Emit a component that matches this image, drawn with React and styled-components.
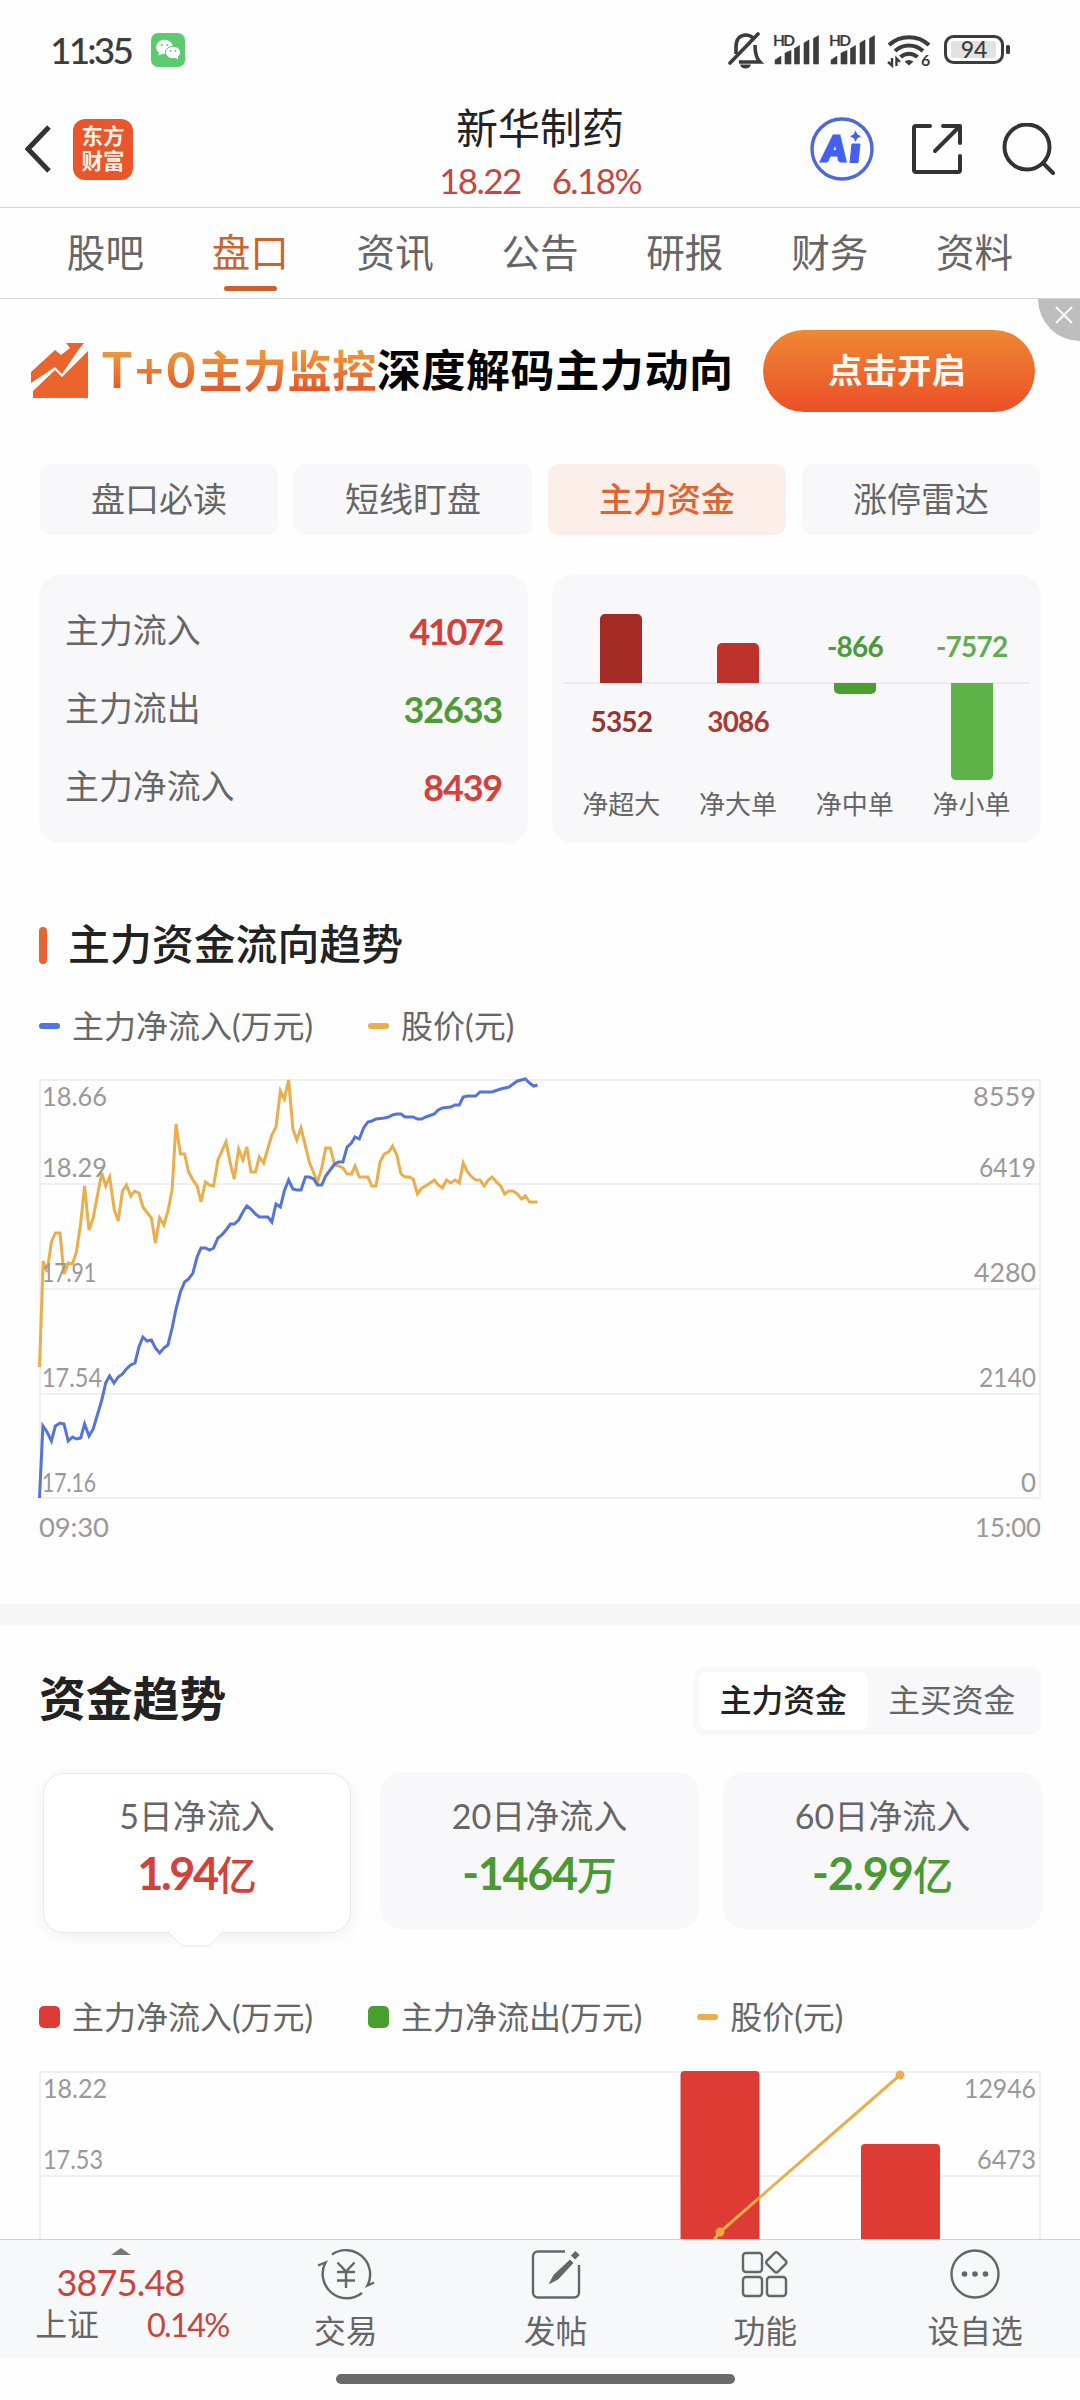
import React from "react";
import styled, { createGlobalStyle } from "styled-components";

const GlobalStyle = createGlobalStyle`
  * {
    box-sizing: border-box;
  }

  body {
    margin: 0;
    background: #fefefe;
    font-family: Lato, "Noto Sans CJK SC", sans-serif;
    line-height: 1;
    color: #666;
  }
`;

const Screen = styled.div`
  width: 1080px;
  height: 2400px;
  display: flex;
  flex-direction: column;
  overflow: hidden;
  background: #fefefe;
`;

/* ---------- status bar ---------- */

const StatusBar = styled.div`
  height: 100px;
  flex: none;
  display: flex;
  align-items: center;
  justify-content: space-between;
  padding: 0 69px 0 50px;
  color: #3c3c3c;
`;

const StatusLeft = styled.div`
  display: flex;
  align-items: center;
  gap: 20px;
`;

const Clock = styled.span`
  width: 81px;
  padding-bottom: 1px;
  font-size: 37px;
  font-weight: 500;
  letter-spacing: -2.8px;
  white-space: nowrap;
`;

/* ---------- header ---------- */

const Header = styled.header`
  height: 108px;
  flex: none;
  display: grid;
  grid-template-columns: 1fr auto 1fr;
  align-items: center;
  padding: 0 25px 11px;
  border-bottom: 1px solid #d6d6d6;
`;

const HeaderLeft = styled.div`
  display: flex;
  align-items: center;
  gap: 22px;
`;

const AppBadge = styled.div`
  width: 60px;
  height: 61px;
  border-radius: 12px;
  background: #ea552a;
  color: #fff3ea;
  display: flex;
  flex-direction: column;
  align-items: center;
  justify-content: center;
  font-size: 21.5px;
  font-weight: 700;
  line-height: 25px;
`;

const HeaderTitle = styled.div`
  display: flex;
  flex-direction: column;
  align-items: center;
  padding-top: 7px;

  h1 {
    margin: 0;
    font-size: 42px;
    font-weight: 400;
    color: #222;
  }

  p {
    margin: 13px 0 0;
    display: flex;
    gap: 31px;
    font-size: 35px;
    line-height: 36px;
    letter-spacing: -1.6px;
    color: #c8453d;
  }
`;

const HeaderActions = styled.div`
  display: flex;
  align-items: center;
  justify-content: flex-end;
  gap: 36px;

  svg:last-child {
    margin-left: 3px;
  }
`;

/* ---------- tabs ---------- */

const Tabs = styled.nav`
  height: 91px;
  flex: none;
  display: flex;
  padding: 0 33px;
  border-bottom: 1px solid #d6d6d6;
`;

const Tab = styled.a`
  flex: 1;
  display: flex;
  flex-direction: column;
  align-items: center;
  padding-top: 25px;
  font-size: 38.6px;
  color: ${(p) => (p.$active ? "#c9632f" : "#666")};

  &:after {
    content: "";
    width: 53px;
    height: 5px;
    margin-top: 14px;
    border-radius: 3px;
    background: ${(p) => (p.$active ? "#c9602f" : "transparent")};
  }
`;

/* ---------- banner ---------- */

const Banner = styled.div`
  position: relative;
  height: 165px;
  flex: none;
  display: flex;
  align-items: flex-start;
  padding: 31px 45px 0 31px;
`;

const BannerIcon = styled.svg`
  margin: 12px 14px 0 0;
  flex: none;
`;

const BannerText = styled.div`
  display: flex;
  align-items: center;
  height: 80px;
  flex: 1;
  font-size: 44px;
  font-weight: 700;
  letter-spacing: 0.6px;
  color: #000;
  white-space: nowrap;
`;

const Highlight = styled.span`
  line-height: 60px;
  color: transparent;
  background: linear-gradient(#e9a040 14%, #ee8433 40%, #e0522a 88%);
  background-clip: text;
  -webkit-background-clip: text;

  b {
    font-size: 50px;
    font-weight: 700;
    letter-spacing: 2.8px;
  }
`;

const BannerButton = styled.button`
  width: 272px;
  height: 82px;
  border: 0;
  border-radius: 41px;
  background: linear-gradient(#ef8833, #ea4f28);
  color: #fff8ee;
  font: 700 34.5px/1 Lato, "Noto Sans CJK SC", sans-serif;
  padding: 0 4px 2px 0;
`;

const CloseCorner = styled.div`
  position: absolute;
  top: 0;
  right: 0;
  width: 42px;
  height: 42px;
  border-bottom-left-radius: 42px;
  background: #bdbdbd;
  display: flex;
  padding: 7px 0 0 17px;
`;

/* ---------- chips and summary cards ---------- */

const Chips = styled.div`
  display: flex;
  gap: 16px;
  padding: 0 40px;
`;

const Chip = styled.div`
  flex: 1;
  height: 71px;
  border-radius: 11px;
  display: flex;
  align-items: center;
  justify-content: center;
  padding-bottom: 1px;
  font-size: 34px;
  font-weight: ${(p) => (p.$active ? 500 : 400)};
  color: ${(p) => (p.$active ? "#de6531" : "#666")};
  background: ${(p) => (p.$active ? "#fceee8" : "#f8f8fa")};
`;

const Cards = styled.div`
  display: grid;
  grid-template-columns: 1fr 1fr;
  gap: 24px;
  margin-top: 40px;
  padding: 0 39px;
`;

const Card = styled.div`
  height: 268px;
  border-radius: 21px;
  background: #f8f8fa;
`;

const FlowCard = styled(Card)`
  padding: 17px 26px 0 26px;
`;

const FlowRow = styled.div`
  height: 78px;
  display: flex;
  align-items: center;
  justify-content: space-between;
  font-size: 33.9px;
`;

const FlowValue = styled.span`
  font-size: 36px;
  font-weight: 700;
  letter-spacing: ${(p) => p.$tracking}px;
  color: ${(p) => (p.$up ? "#d2423a" : "#4d9b35")};
`;

const NetCard = styled(Card)`
  padding: 0 11px;
  display: flex;
  flex-direction: column;
`;

const NetColumns = styled.div`
  display: flex;
  height: 208px;
  background: linear-gradient(#ececee, #ececee) 0 107px / 100% 2px no-repeat;
`;

const NetColumn = styled.div`
  flex: 1;
  display: flex;
  flex-direction: column;
  align-items: center;
`;

const NetHalf = styled.div`
  width: 100%;
  display: flex;
  flex-direction: column;
  align-items: center;
`;

const NetUpper = styled(NetHalf)`
  height: 108px;
  justify-content: flex-end;
`;

const NetLower = styled(NetHalf)`
  height: 100px;
`;

const NetBar = styled.div`
  width: 42px;
  background: ${(p) => p.$color};
  border-radius: ${(p) => (p.$positive ? "5px 5px 0 0" : "0 0 5px 5px")};
`;

const NetValue = styled.span`
  font-size: 28px;
  font-weight: 700;
  letter-spacing: -0.8px;
  color: ${(p) => p.$color};
  margin: ${(p) => (p.$positive ? "24px 0 0" : "0 0 23px")};
`;

const NetLabels = styled.div`
  display: flex;
  font-size: 26px;
  padding-top: 8px;

  span {
    flex: 1;
    text-align: center;
  }
`;

/* ---------- sections ---------- */

const SectionTitle = styled.h2`
  display: flex;
  align-items: center;
  gap: 21px;
  margin: 81px 0 0 39px;
  height: 42px;
  font-size: 41.9px;
  font-weight: 500;
  color: #222;

  &:before {
    content: "";
    width: 8px;
    height: 37px;
    border-radius: 4px;
    background: #e8632f;
  }
`;

const Legend = styled.div`
  display: flex;
  gap: 55px;
  margin: ${(p) => p.$top}px 0 0 39px;
  font-size: 32px;
  height: 32px;
`;

const LegendItem = styled.div`
  display: flex;
  align-items: center;
  gap: 12px;

  &:before {
    content: "";
    width: 21px;
    height: ${(p) => (p.$square ? 22 : 6)}px;
    border-radius: ${(p) => (p.$square ? 5 : 3)}px;
    background: ${(p) => p.$color};
  }
`;

const Chart = styled.svg`
  display: block;
  margin: ${(p) => p.$top}px 0 0 36px;

  text {
    font-size: 27.5px;
    fill: #999;
  }

  .bar-value {
    font-weight: 700;
    fill: #4a9a35;
  }
`;

const Divider = styled.div`
  height: 21px;
  margin-top: 54px;
  background: #f7f7f7;
`;

const TrendHead = styled.div`
  display: flex;
  align-items: center;
  justify-content: space-between;
  margin-top: 42px;
  padding: 0 39px;

  h2 {
    margin: 0 0 6px;
    font-size: 46.8px;
    font-weight: 700;
    color: #222;
  }
`;

const Segment = styled.div`
  width: 347px;
  height: 68px;
  border-radius: 10px;
  background: #f8f8fa;
  display: flex;
  padding: 5px;
`;

const SegmentItem = styled.div`
  flex: 1;
  border-radius: 8px;
  display: flex;
  align-items: center;
  justify-content: center;
  font-size: 31.8px;
  font-weight: ${(p) => (p.$active ? 500 : 400)};
  color: ${(p) => (p.$active ? "#222" : "#666")};
  background: ${(p) => (p.$active ? "#fff" : "transparent")};
`;

const Periods = styled.div`
  display: grid;
  grid-template-columns: repeat(3, 319px);
  gap: 24px;
  margin: 37px 0 0 37px;
`;

const Period = styled.div`
  position: relative;
  height: ${(p) => (p.$active ? 160 : 157)}px;
  margin: ${(p) => (p.$active ? "1px 5px 0 6px" : "0")};
  border-radius: 21px;
  padding-top: ${(p) => (p.$active ? 25 : 27)}px;
  text-align: center;
  font-size: 34px;
  background: ${(p) => (p.$active ? "#fff" : "#f8f8fa")};
  border: ${(p) => (p.$active ? "1px solid #e9e9e9" : "0")};
  box-shadow: ${(p) => (p.$active ? "0 4px 18px rgba(0, 0, 0, 0.06)" : "none")};

  svg {
    position: absolute;
    left: 124px;
    bottom: -16px;
  }
`;

const PeriodValue = styled.div`
  margin-top: 18px;
  font-size: 40px;
  font-weight: 500;
  color: ${(p) => (p.$up ? "#d2423a" : "#4a9a33")};

  b {
    font-size: 45px;
    letter-spacing: ${(p) => p.$tracking}px;
  }
`;

const Content = styled.main`
  flex: 1;
  min-height: 0;
  overflow: hidden;
`;

/* ---------- bottom bar ---------- */

const BottomBar = styled.footer`
  height: 119px;
  flex: none;
  display: flex;
  background: #f7f8fa;
  border-top: 1px solid #d0d3d6;
`;

const IndexCell = styled.div`
  width: 241px;
  display: flex;
  flex-direction: column;
  align-items: center;
  padding-top: 8px;
  color: #c8453d;

  svg {
    display: block;
  }

  strong {
    margin: 9px 0;
    font-size: 36px;
    font-weight: 400;
    letter-spacing: -0.8px;
  }

  div {
    display: flex;
    align-items: center;
    gap: 48px;
    padding-left: 23px;
    font-size: 32.5px;
    letter-spacing: -1.7px;
  }

  em {
    font-style: normal;
    font-size: 31.8px;
    letter-spacing: 0;
    color: #666;
  }
`;

const Action = styled.div`
  flex: 1;
  display: flex;
  flex-direction: column;
  align-items: center;
  padding-top: 7px;
  font-size: 31.8px;

  svg {
    margin-bottom: 15px;
  }
`;

const HomeIndicator = styled.div`
  height: 42px;
  flex: none;
  display: flex;
  justify-content: center;
  padding: 16px 9px 0 0;
  background: #fefefe;

  &:before {
    content: "";
    width: 399px;
    height: 10px;
    border-radius: 5px;
    background: #6a6a6a;
  }
`;

/* ---------- icons ---------- */

const WeChatIcon = () => (
  <svg width="34" height="34" viewBox="0 0 34 34">
    <rect width="34" height="34" rx="7" fill="#5ccb70" />
    <g fill="#fff">
      <ellipse cx="13.5" cy="14" rx="8.5" ry="7.2" />
      <path d="M8 18l-.5 4.5 5-2z" />
      <ellipse cx="22" cy="19.5" rx="7.6" ry="6.3" stroke="#5ccb70" strokeWidth="1" />
      <path d="M24 24l3 2.8-.2-4z" />
    </g>
    <g fill="#5ccb70">
      <circle cx="10.7" cy="12" r="1.1" />
      <circle cx="16.3" cy="12" r="1.1" />
      <circle cx="19.5" cy="18" r="0.9" />
      <circle cx="24.5" cy="18" r="0.9" />
    </g>
  </svg>
);

/* x runs from 728, y from 31 on the status row */
const SystemIcons = () => (
  <svg width="283" height="38" viewBox="728 31 283 38">
    <g fill="none" stroke="#3c3c3c" strokeWidth="3.6">
      <path d="M736 54V47c0-8 4-12 10-12 3 0 5 1 7 3M755 45c0 8 1 13 5 17h-21" />
      <path d="M730 63l28-29" strokeLinecap="round" />
    </g>
    <path d="M740 64.500h11c-1 3-3 4-5.500 4s-4.500-1-5.500-4z" fill="#3c3c3c" />
    {[773, 829].map((x) => (
      <g key={x} fill="#3c3c3c">
        <text x={x} y="46" fontSize="15.500" fontWeight="700" fontFamily="Lato" textLength="22">
          HD
        </text>
        <path
          d={`M${x + 2} 64v-4l6-4v8zM${x + 12} 64V53l6-2.500V64zM${x + 21.500} 64V48.500l5-3V64zM${x + 31} 64V43l5-3v24zM${x + 40.500} 64V38.500l5-3V64z`}
          stroke="#3c3c3c"
          strokeWidth="0.600"
        />
      </g>
    ))}
    <g fill="none" stroke="#3c3c3c" strokeWidth="4">
      <path d="M889 45c11-10.500 29-10.500 40 0" />
      <path d="M895 51c8-7.500 20-7.500 28 0" />
      <path d="M900.500 57c5-4.500 12-4.500 17 0" />
    </g>
    <path d="M904.500 61.500c3-2 6-2 9 0l-4.500 4z" fill="#3c3c3c" />
    <path d="M888 62l4 3.500v-7.500M896.500 66v-7.500l3.500 3.500" fill="none" stroke="#3c3c3c" strokeWidth="2.400" />
    <text x="921" y="66" fontSize="16" fontWeight="700" fill="#3c3c3c" fontFamily="Lato">
      6
    </text>
    <rect x="945.500" y="36.500" width="57" height="26" rx="8" fill="none" stroke="#3c3c3c" strokeWidth="3" />
    <rect x="951" y="41" width="45" height="17" rx="3" fill="#e2e2e2" />
    <text x="974" y="58" fontSize="23" fontWeight="500" textAnchor="middle" fill="#3c3c3c" fontFamily="Lato">
      94
    </text>
    <rect x="1006" y="45" width="4" height="9" rx="1.500" fill="#3c3c3c" />
  </svg>
);

const BackIcon = () => (
  <svg width="26" height="50" viewBox="0 0 26 50">
    <path d="M24 3L3 25l21 22" fill="none" stroke="#333" strokeWidth="5" />
  </svg>
);

const AiIcon = () => (
  <svg width="66" height="66" viewBox="0 0 66 66">
    <circle cx="33" cy="33" r="30" fill="none" stroke="#4b69d8" strokeWidth="3.400" />
    <text x="14" y="44.500" fontFamily="Lato" fontWeight="900" fontStyle="italic" fontSize="34" fill="#4361ee" stroke="#4361ee" strokeWidth="3" textLength="23" lengthAdjust="spacingAndGlyphs">
      A
    </text>
    <path d="M43 28h8l-2 18.500h-8z" fill="#4361ee" stroke="#4361ee" strokeWidth="1" strokeLinejoin="round" />
    <path d="M46.500 14.500l1.800 3.800 3.700 2-3.700 2-1.800 3.800-1.800-3.800-3.700-2 3.700-2z" fill="#4361ee" />
  </svg>
);

const ShareIcon = () => (
  <svg width="52" height="52" viewBox="0 0 52 52" fill="none" stroke="#333" strokeWidth="4" strokeLinecap="round" strokeLinejoin="round">
    <path d="M19 3H5a2 2 0 0 0-2 2v42a2 2 0 0 0 2 2h42a2 2 0 0 0 2-2V33" />
    <path d="M32 3h17v17M48 4L24 28" />
  </svg>
);

const SearchIcon = () => (
  <svg width="53" height="52" viewBox="0 0 53 52" fill="none" stroke="#333" strokeWidth="4" strokeLinecap="round">
    <circle cx="25" cy="24" r="22.500" />
    <path d="M41 40l10 10" />
  </svg>
);

const TradeIcon = () => (
  <svg width="58" height="54" viewBox="0 0 58 54" fill="none" stroke="#666" strokeWidth="2.400">
    <path d="M15 7.500A24.300 24.300 0 0 1 50.500 38.500l6.500-3" />
    <path d="M45 46A24.300 24.300 0 0 1 8.500 15.500l-7.500 3" />
    <path d="M20.500 15.500l8.500 9 8.500-9M29 24.500V41M20 25h18M20 33.500h18" />
  </svg>
);

const PostIcon = () => (
  <svg width="54" height="54" viewBox="0 0 54 54" fill="none" stroke="#666" strokeWidth="2.400">
    <path d="M36 4.500H9a5 5 0 0 0-5 5v36a5 5 0 0 0 5 5h36a5 5 0 0 0 5-5V18" />
    <path d="M41 13L25 28l-4.500 8.500L29 32 44 16z" fill="#666" strokeWidth="1" />
    <path d="M44 10.500l4.500-4.500" strokeWidth="6" />
  </svg>
);

const GridIcon = () => (
  <svg width="54" height="54" viewBox="0 0 54 54" fill="none" stroke="#666" strokeWidth="2.400">
    <rect x="5" y="6" width="19" height="19" rx="3" />
    <rect x="5" y="30" width="19" height="19" rx="3" />
    <rect x="29" y="30" width="19" height="19" rx="3" />
    <rect x="30.500" y="7.500" width="15.600" height="15.600" rx="2.500" transform="rotate(45 38.300 15.300)" />
  </svg>
);

const MoreIcon = () => (
  <svg width="54" height="54" viewBox="0 0 54 54">
    <circle cx="27" cy="27" r="23.500" fill="none" stroke="#666" strokeWidth="2.400" />
    <g fill="#666">
      <circle cx="16.500" cy="27" r="2.800" />
      <circle cx="27" cy="27" r="2.800" />
      <circle cx="37.500" cy="27" r="2.800" />
    </g>
  </svg>
);

/* ---------- data ---------- */

const tabs = ["股吧", "盘口", "资讯", "公告", "研报", "财务", "资料"];
const chips = ["盘口必读", "短线盯盘", "主力资金", "涨停雷达"];

const flows = [
  { label: "主力流入", value: "41072", up: true, tracking: -2.4 },
  { label: "主力流出", value: "32633", up: false, tracking: -1.2 },
  { label: "主力净流入", value: "8439", up: true, tracking: -1.2 },
];

const nets = [
  { label: "净超大", value: 5352, height: 69, bar: "#a52c26", text: "#96352e" },
  { label: "净大单", value: 3086, height: 40, bar: "#bd322a", text: "#ac3a32" },
  { label: "净中单", value: -866, height: 11, bar: "#4b9f2f", text: "#4a9a35" },
  { label: "净小单", value: -7572, height: 97, bar: "#5db348", text: "#62ad52" },
];

const periods = [
  { label: "5日净流入", value: "1.94", unit: "亿", up: true, tracking: -2.4 },
  { label: "20日净流入", value: "-1464", unit: "万", up: false, tracking: -1.3 },
  { label: "60日净流入", value: "-2.99", unit: "亿", up: false, tracking: -1 },
];

const pricePoints =
  "39.5,1367 43.2,1261 47.1,1272 51.4,1242 55.4,1233 60,1233 64,1274 68.2,1263 72.5,1264 76.4,1252 78.6,1237 80.7,1223 84.6,1186 89,1230 93.2,1218 97.1,1197 101.8,1173 105.7,1186 109.6,1177 114.3,1210 118.2,1221 122.5,1191 126.4,1185 130.7,1196 134.6,1191 139,1193 142.9,1207 151.4,1218 155.4,1243 159.6,1218 163.9,1225 167.9,1211 172.1,1190 176,1124 180.4,1154 184.6,1154 188.6,1172 192.9,1180 197.1,1186 201,1202 205.4,1182 209.6,1185 213.6,1186 217.9,1160 226,1142 230.4,1164 234.3,1179 238.6,1149 242.9,1160 246.8,1147 251,1172 255.4,1172 259.3,1157 263.6,1163 271.8,1135 276,1127 280.4,1091 284.3,1099 288.6,1080 292.9,1129 296.8,1140 301,1128 309.3,1162 317.5,1182 321.8,1168 325.7,1148 330.4,1148 334.6,1165 338.6,1166 342.9,1168 347.1,1174 351.4,1174 355,1166 359.3,1177 367.9,1177 371.8,1186 376,1186 380,1162 384.3,1154 388.6,1152 392.5,1146 396.8,1155 401,1174 405,1177 409.3,1177 413.2,1179 417.5,1194 421.8,1188 425.7,1186 434.3,1180 438.2,1185 442.5,1188 446.4,1180 450.7,1183 455,1180 459.3,1183 463.2,1163 467.5,1172 471.8,1177 475.7,1180 480,1180 484.3,1186 488.2,1180 492.1,1177 496.4,1182 500.7,1186 504.6,1194 509,1191 513.2,1191 517.5,1194 521.4,1199 525.4,1196 529.6,1202 537.5,1202";

const inflowPoints =
  "39.5,1498 42.9,1426 47.1,1432 51.4,1441 55.4,1426 60,1423 64,1424 68.2,1441 72.5,1437 76.4,1439 80.7,1438 84.6,1424 89,1436 93.2,1429 101.8,1400 105.7,1383 109.6,1376 114,1383 118.2,1377 122.5,1374 126.4,1369 130.7,1365 135,1363 138.9,1347 142.9,1337 147.1,1341 151.4,1340 155.4,1348 159.6,1353 163.9,1348 167.9,1345 172.1,1328 176,1309 180.4,1292 184.6,1282 188.6,1279 192.9,1273 197.1,1257 201,1248 205.4,1248 209.6,1250 213.6,1248 217.9,1238 221.8,1235 226,1230 230.4,1224 234.3,1224 238.6,1220 242.9,1212 246.8,1206 251,1209 255.4,1214 259.3,1217 267.9,1217 271.8,1222 276,1204 280.4,1207 284.3,1191 288.6,1180 292.9,1189 296.8,1190 301,1190 305.4,1177 309.3,1177 313.6,1179 317.5,1185 321.8,1185 325.7,1176 334.6,1164 338.6,1162 342.9,1162 347.1,1147 351.4,1143 355,1137 359.3,1139 363.6,1128 367.9,1122 371.8,1121 376,1119 384.3,1118 388.6,1117 392.5,1115 396.8,1114 401,1114 405,1117 413.2,1117 417.5,1119 421.8,1119 425.7,1117 434.3,1114 438.2,1110 442.5,1108 450.7,1107 455,1105 459.3,1105 463.2,1097 467.5,1096 475.7,1096 480,1092 492.1,1092 500.7,1089 509,1087 513.2,1084 517.5,1081 525.4,1079 529.6,1083 533.6,1086 537.5,1085";

/* [text, width] for both axes, then the baseline */
const intradayLabels = [
  [["18.66", 65], ["8559", 63], 1106],
  [["18.29", 65], ["6419", 57], 1177],
  [["17.91", 54], ["4280", 62], 1282],
  [["17.54", 60], ["2140", 57], 1387],
  [["17.16", 54], ["0", 15], 1492],
];

const dailyLabels = [
  [["18.22", 64], ["12946", 72], 2098],
  [["17.53", 60], ["6473", 59], 2169],
];

const AxisLabels = ({ rows, left }) =>
  rows.map(([start, end, y]) => (
    <React.Fragment key={y}>
      <text x={left} y={y} textLength={start[1]} lengthAdjust="spacingAndGlyphs">
        {start[0]}
      </text>
      <text x={1036 - end[1]} y={y} textLength={end[1]} lengthAdjust="spacingAndGlyphs">
        {end[0]}
      </text>
    </React.Fragment>
  ));

const IntradayChart = () => (
  <Chart $top={30} width="1010" height="478" viewBox="36 1072 1010 478">
    <path
      d="M39 1080H1041M39 1184H1041M39 1289H1041M39 1394H1041M39 1498H1041M40 1079V1499M1040 1079V1499"
      stroke="#f0f0f0"
      strokeWidth="2"
      fill="none"
    />
    <polyline points={pricePoints} fill="none" stroke="#eaae4c" strokeWidth="3" />
    <polyline points={inflowPoints} fill="none" stroke="#5474da" strokeWidth="3" />
    <AxisLabels rows={intradayLabels} left={42} />
    <text x="39" y="1537" textLength="70">09:30</text>
    <text x="975" y="1537" textLength="66" lengthAdjust="spacingAndGlyphs">15:00</text>
  </Chart>
);

const DailyChart = () => (
  <Chart $top={31} width="1010" height="200" viewBox="36 2064 1010 200">
    <path
      d="M39 2072H1041M39 2176H1041M40 2071V2264M1040 2071V2264"
      stroke="#f0f0f0"
      strokeWidth="2"
      fill="none"
    />
    <path d="M680.500 2264V2075a4 4 0 0 1 4-4h71a4 4 0 0 1 4 4V2264zM861 2264V2148a4 4 0 0 1 4-4h71a4 4 0 0 1 4 4V2264z" fill="#de3b34" />
    <path d="M900 2075L720 2232L696 2264" fill="none" stroke="#eaae4c" strokeWidth="3" />
    <circle cx="900" cy="2075" r="4.500" fill="#eaae4c" />
    <circle cx="720" cy="2232" r="4.500" fill="#f5a83f" />
    <AxisLabels rows={dailyLabels} left={43} />
    <text className="bar-value" x="157" y="2258" textLength="48">-44</text>
    <text className="bar-value" x="325" y="2258" textLength="73">-2489</text>
  </Chart>
);

const NetItem = ({ item }) => {
  const positive = item.value > 0;
  const bar = (
    <NetBar $color={item.bar} $positive={positive} style={{ height: item.height }} />
  );
  const value = (
    <NetValue $color={item.text} $positive={positive}>
      {item.value}
    </NetValue>
  );

  return (
    <NetColumn>
      <NetUpper>{positive ? bar : value}</NetUpper>
      <NetLower>{positive ? value : bar}</NetLower>
    </NetColumn>
  );
};

const App = () => {
  return (
    <Screen>
      <GlobalStyle />
      <StatusBar>
        <StatusLeft>
          <Clock>11:35</Clock>
          <WeChatIcon />
        </StatusLeft>
        <SystemIcons />
      </StatusBar>

      <Header>
        <HeaderLeft>
          <BackIcon />
          <AppBadge>
            <span>东方</span>
            <span>财富</span>
          </AppBadge>
        </HeaderLeft>
        <HeaderTitle>
          <h1>新华制药</h1>
          <p>
            <span>18.22</span>
            <span>6.18%</span>
          </p>
        </HeaderTitle>
        <HeaderActions>
          <AiIcon />
          <ShareIcon />
          <SearchIcon />
        </HeaderActions>
      </Header>

      <Tabs>
        {tabs.map((tab, index) => (
          <Tab key={tab} $active={index === 1}>
            {tab}
          </Tab>
        ))}
      </Tabs>

      <Content>
        <Banner>
          <BannerIcon width="57" height="56" viewBox="0 0 57 56" fill="#ea642d">
            <path d="M0 41V30L24 8l6 5 9-7-4-5h18l-5 6L31 32l-7-7z" />
            <path d="M2 56V49L24 28l7 7L57 9v47z" />
          </BannerIcon>
          <BannerText>
            <Highlight>
              <b>T+0</b>主力监控
            </Highlight>
            深度解码主力动向
          </BannerText>
          <BannerButton>点击开启</BannerButton>
          <CloseCorner>
            <svg width="18" height="18" viewBox="0 0 18 18">
              <path d="M1 1l16 16M17 1L1 17" stroke="#fff" strokeWidth="2" />
            </svg>
          </CloseCorner>
        </Banner>

        <Chips>
          {chips.map((chip, index) => (
            <Chip key={chip} $active={index === 2}>
              {chip}
            </Chip>
          ))}
        </Chips>

        <Cards>
          <FlowCard>
            {flows.map((flow) => (
              <FlowRow key={flow.label}>
                {flow.label}
                <FlowValue $up={flow.up} $tracking={flow.tracking}>
                  {flow.value}
                </FlowValue>
              </FlowRow>
            ))}
          </FlowCard>
          <NetCard>
            <NetColumns>
              {nets.map((item) => (
                <NetItem key={item.label} item={item} />
              ))}
            </NetColumns>
            <NetLabels>
              {nets.map((item) => (
                <span key={item.label}>{item.label}</span>
              ))}
            </NetLabels>
          </NetCard>
        </Cards>

        <SectionTitle>主力资金流向趋势</SectionTitle>
        <Legend $top={44}>
          <LegendItem $color="#5175e0">主力净流入(万元)</LegendItem>
          <LegendItem $color="#eaae4c">股价(元)</LegendItem>
        </Legend>
        <IntradayChart />

        <Divider />

        <TrendHead>
          <h2>资金趋势</h2>
          <Segment>
            <SegmentItem $active>主力资金</SegmentItem>
            <SegmentItem>主买资金</SegmentItem>
          </Segment>
        </TrendHead>
        <Periods>
          {periods.map((period, index) => (
            <Period key={period.label} $active={index === 0}>
              {period.label}
              <PeriodValue $up={period.up} $tracking={period.tracking}>
                <b>{period.value}</b>
                {period.unit}
              </PeriodValue>
              {index === 0 && (
                <svg width="56" height="17" viewBox="0 0 56 17">
                  <path d="M0 1L14 15H41L55 1" fill="#fff" stroke="#e6e6e6" />
                  <path d="M1 0h53v2H1z" fill="#fff" />
                </svg>
              )}
            </Period>
          ))}
        </Periods>
        <Legend $top={68}>
          <LegendItem $square $color="#de3b34">主力净流入(万元)</LegendItem>
          <LegendItem $square $color="#4a9e2f">主力净流出(万元)</LegendItem>
          <LegendItem $color="#eaae4c">股价(元)</LegendItem>
        </Legend>
        <DailyChart />
      </Content>

      <BottomBar>
        <IndexCell>
          <svg width="20" height="7" viewBox="0 0 20 7">
            <path d="M0 7L10 0l10 7z" fill="#777" />
          </svg>
          <strong>3875.48</strong>
          <div>
            <em>上证</em>
            0.14%
          </div>
        </IndexCell>
        <Action>
          <TradeIcon />
          交易
        </Action>
        <Action>
          <PostIcon />
          发帖
        </Action>
        <Action>
          <GridIcon />
          功能
        </Action>
        <Action>
          <MoreIcon />
          设自选
        </Action>
      </BottomBar>
      <HomeIndicator />
    </Screen>
  );
};

export default App;
